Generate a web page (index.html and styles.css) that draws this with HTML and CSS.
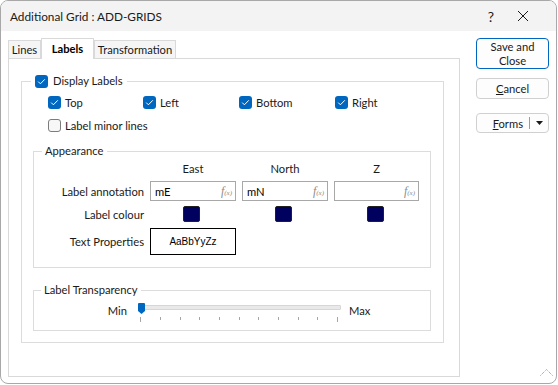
FILE: index.html
```html
<!DOCTYPE html>
<html lang="en">
<head>
  <meta charset="UTF-8" />
  <title>Additional Grid : ADD-GRIDS</title>
  <link rel="stylesheet" href="styles.css">
</head>
<body>
  <div class="window">
    <div class="titlebar">
      <span class="title">Additional Grid : ADD-GRIDS</span>
      <span class="tb-btn help">?</span>
      <span class="tb-btn close">
        <svg viewBox="0 0 12 12"><path d="M1 1L11 11M11 1L1 11" /></svg>
      </span>
    </div>

    <div class="body">
      <div class="main">
        <div class="tabs">
          <div class="tab lines">Lines</div>
          <div class="tab active">Labels</div>
          <div class="tab transf">Transformation</div>
        </div>

        <div class="panel">
          <fieldset class="group display">
            <legend class="check-legend">
              <span class="cb on"><svg viewBox="0 0 13 13"><path d="M3.2 6.6L5.4 8.8L9.8 4.3" /></svg></span>
              Display Labels
            </legend>

            <div class="sides">
              <div class="check-row"><span class="cb on"><svg viewBox="0 0 13 13"><path d="M3.2 6.6L5.4 8.8L9.8 4.3" /></svg></span>Top</div>
              <div class="check-row"><span class="cb on"><svg viewBox="0 0 13 13"><path d="M3.2 6.6L5.4 8.8L9.8 4.3" /></svg></span>Left</div>
              <div class="check-row"><span class="cb on"><svg viewBox="0 0 13 13"><path d="M3.2 6.6L5.4 8.8L9.8 4.3" /></svg></span>Bottom</div>
              <div class="check-row"><span class="cb on"><svg viewBox="0 0 13 13"><path d="M3.2 6.6L5.4 8.8L9.8 4.3" /></svg></span>Right</div>
            </div>

            <div class="check-row minor"><span class="cb off"></span>Label minor lines</div>

            <!-- Appearance -->
            <fieldset class="group appearance">
              <legend>Appearance</legend>
              <div class="grid">
                <span></span>
                <span class="head">East</span>
                <span class="head">North</span>
                <span class="head">Z</span>

                <span class="lbl">Label annotation</span>
                <div class="field">mE<span class="fx"><i>f</i><small>(x)</small></span></div>
                <div class="field">mN<span class="fx"><i>f</i><small>(x)</small></span></div>
                <div class="field"><span></span><span class="fx"><i>f</i><small>(x)</small></span></div>

                <span class="lbl">Label colour</span>
                <span class="swatch"></span>
                <span class="swatch"></span>
                <span class="swatch"></span>

                <span class="lbl">Text Properties</span>
                <div class="text-props">AaBbYyZz</div>
              </div>
            </fieldset>

            <!-- Transparency -->
            <fieldset class="group transparency">
              <legend>Label Transparency</legend>
              <div class="slider-row">
                <span class="min">Min</span>
                <div class="slider">
                  <div class="track"></div>
                  <svg class="ticks" viewBox="0 0 203 5">
                    <path d="M2.5 0V5M22.5 0V3M42.5 0V3M61.5 0V3M81.5 0V3M101.5 0V3M120.5 0V3M140.5 0V3M160.5 0V3M179.5 0V3M199.5 0V5" />
                  </svg>
                  <svg class="thumb" viewBox="0 0 7 11"><path d="M1 0H6A1 1 0 0 1 7 1V8L3.5 11L0 8V1A1 1 0 0 1 1 0Z" /></svg>
                </div>
                <span class="max">Max</span>
              </div>
            </fieldset>
          </fieldset>
        </div>
      </div>

      <div class="side">
        <div class="btn primary">Save and<br>Close</div>
        <div class="btn cancel"><u>C</u>ancel</div>
        <div class="btn forms">
          <span class="forms-label"><u>F</u>orms</span>
          <span class="divider"></span>
          <svg class="arrow" viewBox="0 0 7 4"><path d="M0 0H7L3.5 4Z" /></svg>
        </div>
      </div>
    </div>

    <svg class="grip" viewBox="0 0 13 7"><path d="M0.5 6.5L6.5 0.5L12.5 6.5" /></svg>
  </div>
</body>
</html>
```

FILE: styles.css
```css
body {
  margin: 0;
  background: #fff;
  color: #000;
  font-family: Lato, "Noto Sans", sans-serif;
  font-size: 11.2px;
}

.window {
  position: relative;
  width: 557px;
  height: 384px;
  box-sizing: border-box;
  border: 1px solid #a8a8a8;
  border-radius: 8px;
  overflow: hidden;
  background: #fff;
  display: flex;
  flex-direction: column;
}

.titlebar {
  height: 30px;
  background: #f3f3f3;
  display: flex;
  align-items: center;
  padding-left: 9px;
  padding-right: 17px;
  color: #1a1a1a;
}

.title {
  flex: 1;
  font-size: 11.8px;
}

.tb-btn {
  width: 32px;
  display: flex;
  justify-content: center;
  align-items: center;
}

.help {
  font-size: 14px;
}

.close svg {
  width: 12px;
  height: 12px;
  stroke: #1a1a1a;
  stroke-width: 1;
  fill: none;
}

.body {
  display: flex;
  padding: 7px 0 0 7px;
}

.main {
  width: 452px;
  display: flex;
  flex-direction: column;
}

.tabs {
  display: flex;
  align-items: flex-end;
  height: 20px;
  position: relative;
  z-index: 1;
}

.tab {
  box-sizing: border-box;
  height: 18px;
  border: 1px solid #d9d9d9;
  border-bottom: none;
  background: #f5f5f5;
  line-height: 17px;
  text-align: center;
  color: #1a1a1a;
}

.tab.lines {
  width: 33px;
}

.tab.transf {
  width: 82px;
}

.tab.active {
  width: 53px;
  height: 21px;
  margin-bottom: -1px;
  background: #fff;
  font-weight: bold;
  line-height: 20px;
  color: #000;
}

.panel {
  height: 319px;
  box-sizing: border-box;
  border: 1px solid #d9d9d9;
  padding: 15px 0 0 12px;
}

.group {
  margin: 0;
  padding: 0;
  min-width: 0;
  box-sizing: border-box;
  border: 1px solid #dcdcdc;
}

.group legend {
  line-height: 16px;
  padding: 0 3px;
  color: #1a1a1a;
}

.display {
  width: 423px;
  height: 269px;
}

.check-legend {
  display: flex;
  align-items: center;
  gap: 5px;
  margin-left: 9px;
  height: 14px;
  padding: 0 4px !important;
}

.cb {
  width: 13px;
  height: 13px;
  box-sizing: border-box;
  border-radius: 3px;
  display: inline-flex;
  flex-shrink: 0;
}

.cb.on {
  background: #0067c0;
}

.cb.on svg {
  width: 13px;
  height: 13px;
  stroke: #fff;
  stroke-width: 1;
  fill: none;
}

.cb.off {
  border: 1px solid #7c7c7c;
  background: #f7f7f7;
}

.sides {
  display: grid;
  grid-template-columns: 95px 96px 96px auto;
  margin: 5px 0 0 26px;
}

.check-row {
  display: flex;
  align-items: center;
  gap: 4px;
  height: 18px;
  color: #1a1a1a;
}

.minor {
  margin: 5px 0 0 26px;
}

.appearance {
  width: 398px;
  height: 125px;
  margin: 9px 0 0 11px;
}

.appearance legend {
  margin-left: 8px;
}

.grid {
  display: grid;
  grid-template-columns: 110px 86px 86px 85px;
  grid-template-rows: 14px 20px 17px 27px;
  column-gap: 6px;
  row-gap: 5px;
  margin-top: 3px;
}

.head {
  text-align: center;
  line-height: 14px;
  color: #1a1a1a;
}

.lbl {
  justify-self: end;
  align-self: center;
  color: #1a1a1a;
}

.field {
  box-sizing: border-box;
  border: 1px solid #a8a8a8;
  padding: 0 3px 0 4px;
  display: flex;
  justify-content: space-between;
  align-items: center;
}

.fx {
  font-family: "Liberation Serif", serif;
  color: #8c8c8c;
  font-size: 12px;
}

.fx small {
  font-size: 7px;
  font-style: italic;
}

.swatch {
  justify-self: center;
  width: 17px;
  height: 16px;
  box-sizing: border-box;
  border: 1px solid #202020;
  border-radius: 2px;
  background: #00005e;
  margin-right: 3px;
}

.text-props {
  box-sizing: border-box;
  border: 1px solid #000;
  display: flex;
  justify-content: center;
  align-items: center;
  font-family: "Liberation Sans", sans-serif;
  font-size: 10px;
}

.transparency {
  width: 398px;
  height: 49px;
  margin: 14px 0 0 11px;
}

.transparency legend {
  margin-left: 7px;
}

.slider-row {
  display: flex;
  align-items: flex-start;
  margin-top: 3px;
}

.min,
.max {
  line-height: 14px;
  margin-top: 3px;
  color: #1a1a1a;
}

.min {
  width: 93px;
  text-align: right;
}

.slider {
  position: relative;
  width: 203px;
  height: 22px;
  margin-left: 11px;
}

.track {
  height: 5px;
  margin-top: 4px;
  box-sizing: border-box;
  background: #e9e9e9;
  border: 1px solid #d6d6d6;
  border-radius: 1px;
}

.ticks {
  display: block;
  width: 203px;
  height: 5px;
  margin-top: 7px;
  stroke: #a6a6a6;
  stroke-width: 1;
}

.thumb {
  position: absolute;
  left: 0;
  top: 2px;
  width: 7px;
  height: 11px;
  fill: #0067c0;
}

.max {
  margin-left: 8px;
}

.side {
  margin-left: 16px;
  width: 73px;
  display: flex;
  flex-direction: column;
}

.btn {
  box-sizing: border-box;
  width: 73px;
  border: 1px solid #d0d0d0;
  border-radius: 4px;
  background: #fdfdfd;
  text-align: center;
  color: #1a1a1a;
}

.btn.primary {
  height: 31px;
  border-color: #0067c0;
  line-height: 14px;
  padding-top: 1px;
}

.btn.cancel {
  height: 21px;
  margin-top: 9px;
  line-height: 19px;
}

.btn.forms {
  height: 20px;
  margin-top: 14px;
  display: flex;
  align-items: center;
  justify-content: flex-end;
  padding-right: 5px;
}

.divider {
  width: 1px;
  height: 12px;
  background: #9c9c9c;
  margin: 0 6px 0 6px;
}

.arrow {
  width: 7px;
  height: 4px;
  fill: #1a1a1a;
}

.grip {
  position: absolute;
  right: 3px;
  bottom: 7px;
  width: 13px;
  height: 7px;
  fill: none;
  stroke: #8a8a8a;
  stroke-width: 1;
  stroke-dasharray: 1 1;
}
```
